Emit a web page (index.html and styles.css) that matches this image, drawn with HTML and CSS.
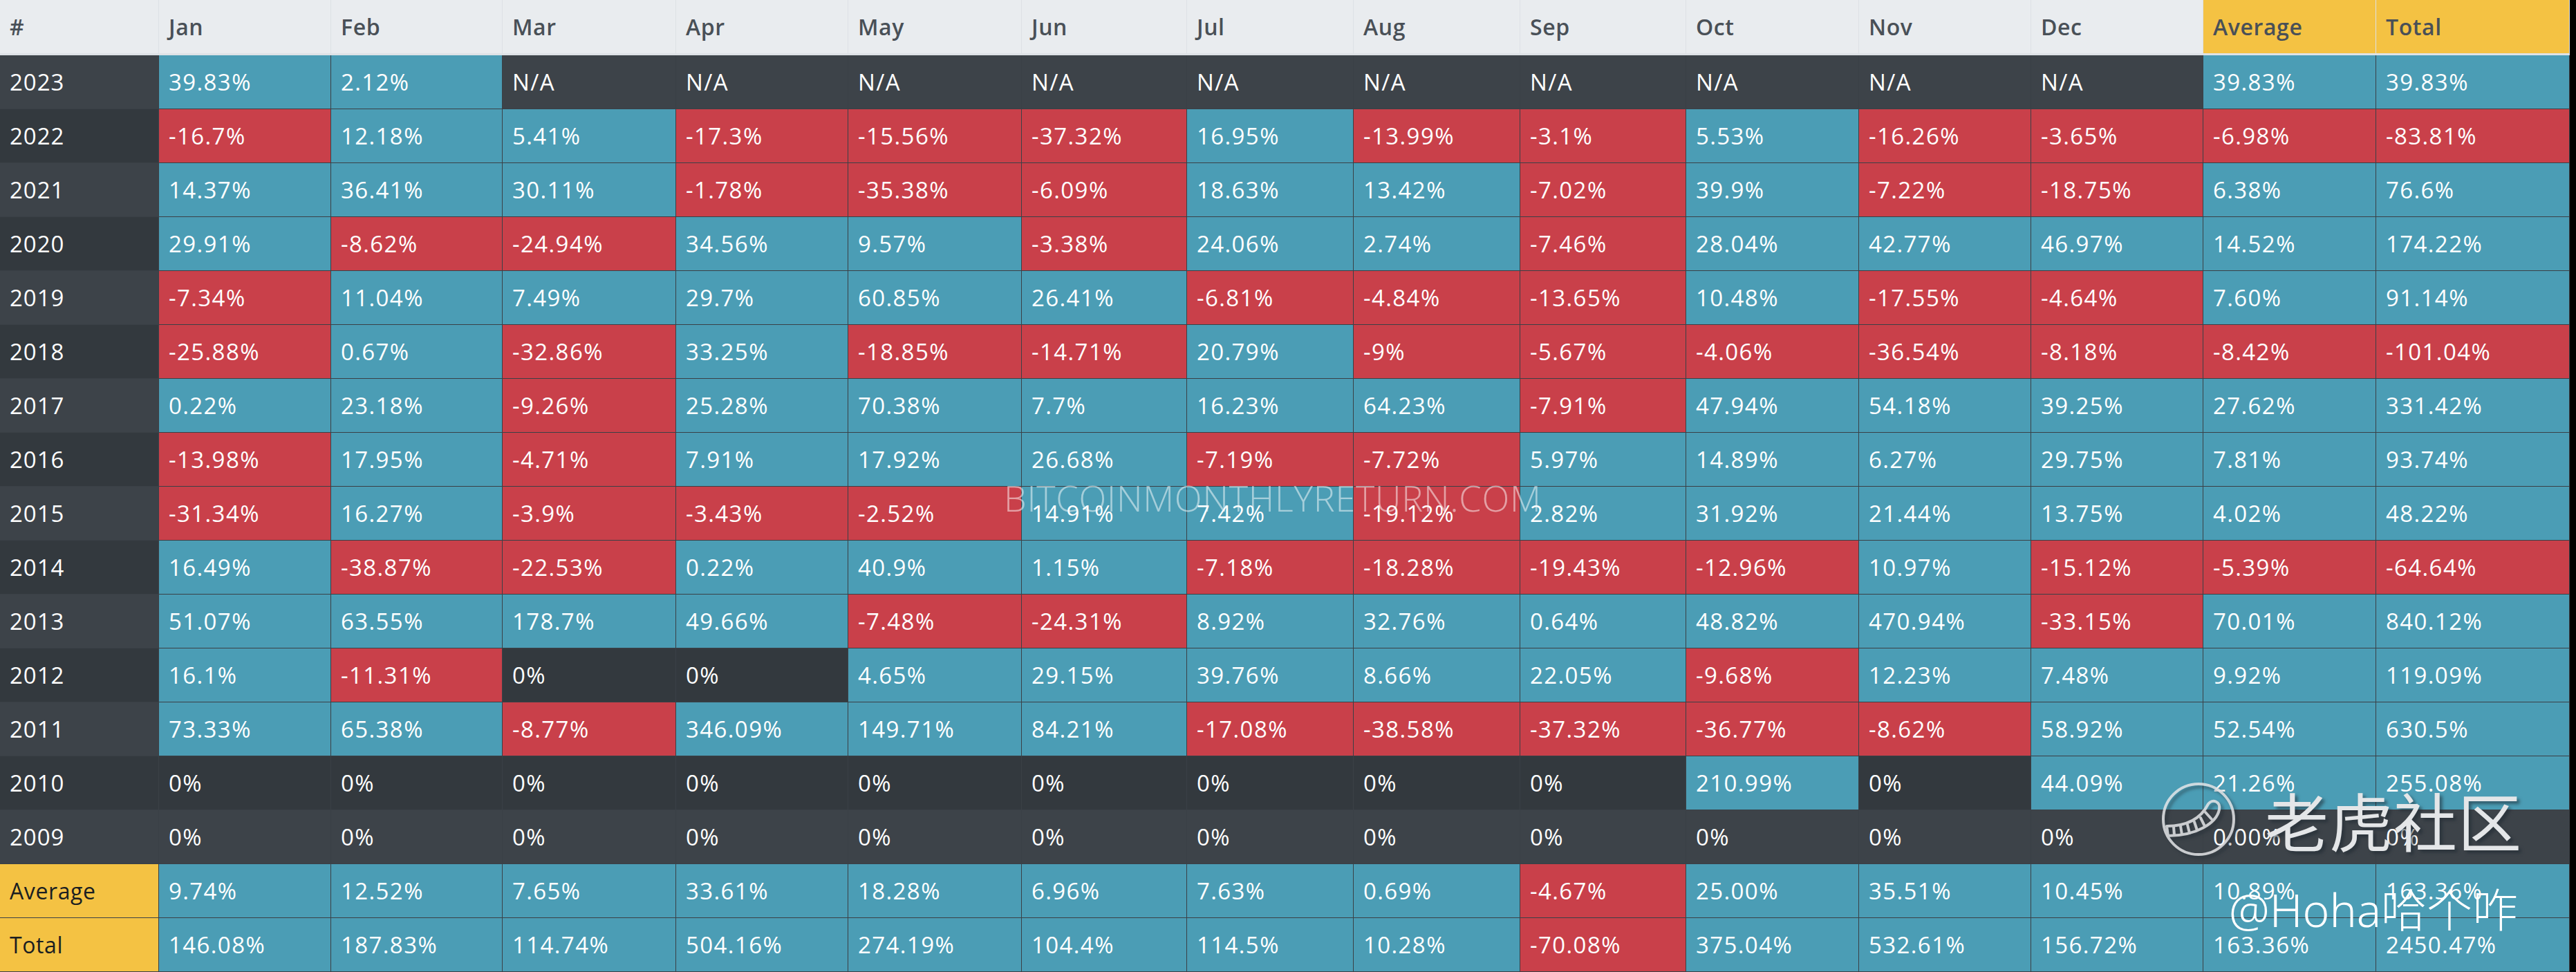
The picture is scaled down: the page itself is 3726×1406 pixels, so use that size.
FILE: index.html
```html
<!DOCTYPE html>
<html lang="en">
<head>
<meta charset="utf-8">
<title>Bitcoin Monthly Returns</title>
<link rel="stylesheet" href="styles.css">
</head>
<body>
<div class="board">
<table class="returns">
<colgroup>
<col class="c-yr"><col class="c-jan"><col class="c-feb"><col class="c-mar"><col class="c-apr"><col class="c-may"><col class="c-jun"><col class="c-jul"><col class="c-aug"><col class="c-sep"><col class="c-oct"><col class="c-nov"><col class="c-dec"><col class="c-avg"><col class="c-tot">
</colgroup>
<thead>
<tr><th>#</th><th>Jan</th><th>Feb</th><th>Mar</th><th>Apr</th><th>May</th><th>Jun</th><th>Jul</th><th>Aug</th><th>Sep</th><th>Oct</th><th>Nov</th><th>Dec</th><th class="hl">Average</th><th class="hl">Total</th></tr>
</thead>
<tbody>
<tr><th class="yr">2023</th><td class="up">39.83%</td><td class="up">2.12%</td><td>N/A</td><td>N/A</td><td>N/A</td><td>N/A</td><td>N/A</td><td>N/A</td><td>N/A</td><td>N/A</td><td>N/A</td><td>N/A</td><td class="up">39.83%</td><td class="up">39.83%</td></tr>
<tr><th class="yr">2022</th><td class="dn">-16.7%</td><td class="up">12.18%</td><td class="up">5.41%</td><td class="dn">-17.3%</td><td class="dn">-15.56%</td><td class="dn">-37.32%</td><td class="up">16.95%</td><td class="dn">-13.99%</td><td class="dn">-3.1%</td><td class="up">5.53%</td><td class="dn">-16.26%</td><td class="dn">-3.65%</td><td class="dn">-6.98%</td><td class="dn">-83.81%</td></tr>
<tr><th class="yr">2021</th><td class="up">14.37%</td><td class="up">36.41%</td><td class="up">30.11%</td><td class="dn">-1.78%</td><td class="dn">-35.38%</td><td class="dn">-6.09%</td><td class="up">18.63%</td><td class="up">13.42%</td><td class="dn">-7.02%</td><td class="up">39.9%</td><td class="dn">-7.22%</td><td class="dn">-18.75%</td><td class="up">6.38%</td><td class="up">76.6%</td></tr>
<tr><th class="yr">2020</th><td class="up">29.91%</td><td class="dn">-8.62%</td><td class="dn">-24.94%</td><td class="up">34.56%</td><td class="up">9.57%</td><td class="dn">-3.38%</td><td class="up">24.06%</td><td class="up">2.74%</td><td class="dn">-7.46%</td><td class="up">28.04%</td><td class="up">42.77%</td><td class="up">46.97%</td><td class="up">14.52%</td><td class="up">174.22%</td></tr>
<tr><th class="yr">2019</th><td class="dn">-7.34%</td><td class="up">11.04%</td><td class="up">7.49%</td><td class="up">29.7%</td><td class="up">60.85%</td><td class="up">26.41%</td><td class="dn">-6.81%</td><td class="dn">-4.84%</td><td class="dn">-13.65%</td><td class="up">10.48%</td><td class="dn">-17.55%</td><td class="dn">-4.64%</td><td class="up">7.60%</td><td class="up">91.14%</td></tr>
<tr><th class="yr">2018</th><td class="dn">-25.88%</td><td class="up">0.67%</td><td class="dn">-32.86%</td><td class="up">33.25%</td><td class="dn">-18.85%</td><td class="dn">-14.71%</td><td class="up">20.79%</td><td class="dn">-9%</td><td class="dn">-5.67%</td><td class="dn">-4.06%</td><td class="dn">-36.54%</td><td class="dn">-8.18%</td><td class="dn">-8.42%</td><td class="dn">-101.04%</td></tr>
<tr><th class="yr">2017</th><td class="up">0.22%</td><td class="up">23.18%</td><td class="dn">-9.26%</td><td class="up">25.28%</td><td class="up">70.38%</td><td class="up">7.7%</td><td class="up">16.23%</td><td class="up">64.23%</td><td class="dn">-7.91%</td><td class="up">47.94%</td><td class="up">54.18%</td><td class="up">39.25%</td><td class="up">27.62%</td><td class="up">331.42%</td></tr>
<tr><th class="yr">2016</th><td class="dn">-13.98%</td><td class="up">17.95%</td><td class="dn">-4.71%</td><td class="up">7.91%</td><td class="up">17.92%</td><td class="up">26.68%</td><td class="dn">-7.19%</td><td class="dn">-7.72%</td><td class="up">5.97%</td><td class="up">14.89%</td><td class="up">6.27%</td><td class="up">29.75%</td><td class="up">7.81%</td><td class="up">93.74%</td></tr>
<tr><th class="yr">2015</th><td class="dn">-31.34%</td><td class="up">16.27%</td><td class="dn">-3.9%</td><td class="dn">-3.43%</td><td class="dn">-2.52%</td><td class="up">14.91%</td><td class="up">7.42%</td><td class="dn">-19.12%</td><td class="up">2.82%</td><td class="up">31.92%</td><td class="up">21.44%</td><td class="up">13.75%</td><td class="up">4.02%</td><td class="up">48.22%</td></tr>
<tr><th class="yr">2014</th><td class="up">16.49%</td><td class="dn">-38.87%</td><td class="dn">-22.53%</td><td class="up">0.22%</td><td class="up">40.9%</td><td class="up">1.15%</td><td class="dn">-7.18%</td><td class="dn">-18.28%</td><td class="dn">-19.43%</td><td class="dn">-12.96%</td><td class="up">10.97%</td><td class="dn">-15.12%</td><td class="dn">-5.39%</td><td class="dn">-64.64%</td></tr>
<tr><th class="yr">2013</th><td class="up">51.07%</td><td class="up">63.55%</td><td class="up">178.7%</td><td class="up">49.66%</td><td class="dn">-7.48%</td><td class="dn">-24.31%</td><td class="up">8.92%</td><td class="up">32.76%</td><td class="up">0.64%</td><td class="up">48.82%</td><td class="up">470.94%</td><td class="dn">-33.15%</td><td class="up">70.01%</td><td class="up">840.12%</td></tr>
<tr><th class="yr">2012</th><td class="up">16.1%</td><td class="dn">-11.31%</td><td>0%</td><td>0%</td><td class="up">4.65%</td><td class="up">29.15%</td><td class="up">39.76%</td><td class="up">8.66%</td><td class="up">22.05%</td><td class="dn">-9.68%</td><td class="up">12.23%</td><td class="up">7.48%</td><td class="up">9.92%</td><td class="up">119.09%</td></tr>
<tr><th class="yr">2011</th><td class="up">73.33%</td><td class="up">65.38%</td><td class="dn">-8.77%</td><td class="up">346.09%</td><td class="up">149.71%</td><td class="up">84.21%</td><td class="dn">-17.08%</td><td class="dn">-38.58%</td><td class="dn">-37.32%</td><td class="dn">-36.77%</td><td class="dn">-8.62%</td><td class="up">58.92%</td><td class="up">52.54%</td><td class="up">630.5%</td></tr>
<tr><th class="yr">2010</th><td>0%</td><td>0%</td><td>0%</td><td>0%</td><td>0%</td><td>0%</td><td>0%</td><td>0%</td><td>0%</td><td class="up">210.99%</td><td>0%</td><td class="up">44.09%</td><td class="up">21.26%</td><td class="up">255.08%</td></tr>
<tr><th class="yr">2009</th><td>0%</td><td>0%</td><td>0%</td><td>0%</td><td>0%</td><td>0%</td><td>0%</td><td>0%</td><td>0%</td><td>0%</td><td>0%</td><td>0%</td><td>0.00%</td><td>0%</td></tr>
</tbody>
<tfoot>
<tr><th class="lbl">Average</th><td class="up">9.74%</td><td class="up">12.52%</td><td class="up">7.65%</td><td class="up">33.61%</td><td class="up">18.28%</td><td class="up">6.96%</td><td class="up">7.63%</td><td class="up">0.69%</td><td class="dn">-4.67%</td><td class="up">25.00%</td><td class="up">35.51%</td><td class="up">10.45%</td><td class="up">10.89%</td><td class="up">163.36%</td></tr>
<tr><th class="lbl">Total</th><td class="up">146.08%</td><td class="up">187.83%</td><td class="up">114.74%</td><td class="up">504.16%</td><td class="up">274.19%</td><td class="up">104.4%</td><td class="up">114.5%</td><td class="up">10.28%</td><td class="dn">-70.08%</td><td class="up">375.04%</td><td class="up">532.61%</td><td class="up">156.72%</td><td class="up">163.36%</td><td class="up">2450.47%</td></tr>
</tfoot>
</table>

<div class="site-mark">BITCOINMONTHLYRETURN.COM</div>

<div class="tiger-mark">
<svg class="tiger-logo" viewBox="0 0 120 120" width="120" height="120" aria-hidden="true">
<g fill="none" stroke="#e4e6e8" stroke-width="4" stroke-linecap="round" stroke-linejoin="round">
<circle cx="58" cy="60" r="51"/>
<path d="M72 38 C78 30 90 34 88 46 C84 66 54 84 14 84 L12 70 C42 70 62 58 72 38 Z"/>
<path d="M22 71 L23 83 M32 70 L34 82 M42 68 L45 80 M52 64 L56 76 M61 58 L67 70 M68 50 L77 60"/>
</g>
</svg>
<span class="tiger-name">老虎社区</span>
</div>
<div class="author-mark">@Hoha哈个咋</div>
</div>
</body>
</html>
```

FILE: styles.css
```css
html, body {
  margin: 0;
  padding: 0;
  background: #000;
}

.board {
  position: relative;
  width: 3726px;
  height: 1406px;
  overflow: hidden;
  font-family: "Open Sans", "Noto Sans", sans-serif;
}

.returns {
  width: 3717px;
  table-layout: fixed;
  border-collapse: separate;
  border-spacing: 0;
  font-size: 33px;
  letter-spacing: 1.4px;
  color: #fff;
}

.c-yr { width: 230px; }
.c-jan { width: 249px; }
.c-feb { width: 248px; }
.c-mar { width: 251px; }
.c-apr { width: 249px; }
.c-may { width: 251px; }
.c-jun { width: 239px; }
.c-jul { width: 241px; }
.c-aug { width: 241px; }
.c-sep { width: 240px; }
.c-oct { width: 250px; }
.c-nov { width: 249px; }
.c-dec { width: 249px; }
.c-avg { width: 250px; }
.c-tot { width: 280px; }

.returns th,
.returns td {
  padding: 0 0 0 14px;
  text-align: left;
  vertical-align: middle;
  white-space: nowrap;
  line-height: 44px;
  box-sizing: border-box;
}

.returns thead tr { height: 80px; }
.returns thead th {
  background: #e9ecef;
  color: #495057;
  font-size: 32px;
  letter-spacing: 0.6px;
  font-weight: 600;
  border-right: 1px solid #dde1e5;
  border-bottom: 3px solid #dee2e6;
}
.returns thead th.hl {
  background: #f4c243;
}

.returns tbody tr,
.returns tfoot tr { height: 78px; }

.returns tbody th,
.returns tbody td,
.returns tfoot th,
.returns tfoot td {
  font-weight: 400;
  border-right: 1px solid #3a4046;
  border-bottom: 1px solid #3a4046;
}

.returns tbody th.yr {
  font-size: 33px;
  letter-spacing: 1px;
}

.returns tfoot th {
  font-size: 32px;
  letter-spacing: 0.6px;
}

.returns tbody tr:nth-child(odd) { background: #3d4349; }
.returns tbody tr:nth-child(even) { background: #33393e; }

.returns td.up { background: #4b9db5; }
.returns td.dn { background: #c9404a; }

.returns tfoot th.lbl {
  background: #f4c243;
  color: #1b1e21;
}

.site-mark {
  position: absolute;
  left: 1452px;
  top: 684px;
  font-size: 52px;
  line-height: 72px;
  font-weight: 300;
  letter-spacing: 0.8px;
  color: rgba(255, 255, 255, 0.5);
  white-space: nowrap;
}

.tiger-mark {
  position: absolute;
  left: 3122px;
  top: 1125px;
  display: flex;
  align-items: center;
  gap: 34px;
  filter: drop-shadow(4px 4px 2px rgba(30, 40, 50, 0.55));
}

.tiger-logo {
  display: block;
  opacity: 0.85;
}

.tiger-name {
  font-family: "Noto Sans CJK SC", "Noto Sans", sans-serif;
  font-size: 92px;
  line-height: 1;
  color: #e4e6e8;
  letter-spacing: 1px;
}

.author-mark {
  position: absolute;
  left: 3224px;
  top: 1282px;
  font-family: "Noto Sans", "Noto Sans CJK SC", sans-serif;
  font-size: 66px;
  line-height: 1;
  font-weight: 300;
  color: #fff;
  white-space: nowrap;
}
```
